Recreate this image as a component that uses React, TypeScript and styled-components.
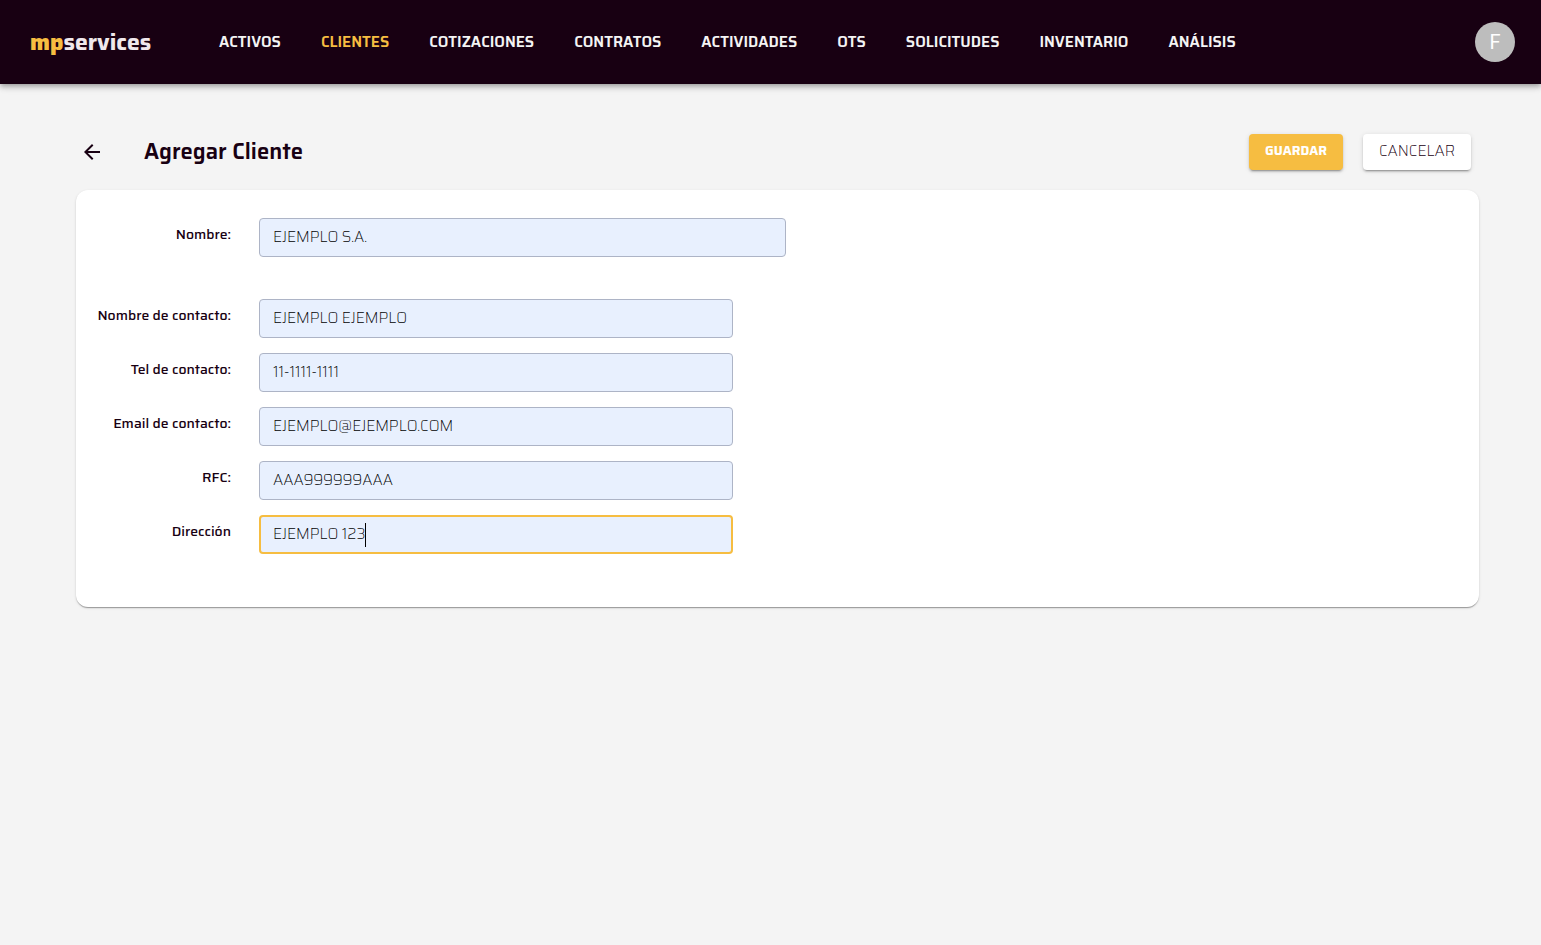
import React from "react";
import styled, { createGlobalStyle, css } from "styled-components";

const ink = "#180012";
const amber = "#f6bd41";

const GlobalStyle = createGlobalStyle`
  *, *::before, *::after { box-sizing: border-box; }
  body {
    margin: 0;
    min-height: 100vh;
    background: #f4f4f4;
    color: ${ink};
    font-family: Saira, Roboto, "Liberation Sans", sans-serif;
    font-size: 14px;
  }
`;

const Header = styled.header`
  display: flex;
  align-items: center;
  min-height: 84px;
  padding: 0 26px 0 30px;
  background: ${ink};
  box-shadow: 0 2px 4px -1px rgba(0, 0, 0, 0.2), 0 4px 5px rgba(0, 0, 0, 0.14),
    0 1px 10px rgba(0, 0, 0, 0.12);
`;

const Logo = styled.a`
  flex: none;
  width: 189px;
  color: #f0e8ec;
  font-size: 23px;
  font-weight: 700;
  line-height: 26px;
  text-decoration: none;
`;

const LogoAccent = styled.span`
  color: ${amber};
  font-weight: 800;
`;

const Nav = styled.nav`
  display: flex;
  flex-wrap: wrap;
  gap: 8px 40px;
  flex: 1;
`;

const NavLink = styled.a<{ $active?: boolean }>`
  color: ${(p) => (p.$active ? amber : "#f4f4f4")};
  font-size: 15px;
  font-weight: 600;
  line-height: 20px;
  text-decoration: none;
`;

const Avatar = styled.button`
  display: flex;
  align-items: center;
  justify-content: center;
  flex: none;
  width: 40px;
  height: 40px;
  padding: 0;
  border: 0;
  border-radius: 50%;
  background: #bdbdbd;
  color: #fff;
  font-family: Roboto, sans-serif;
  font-size: 20px;
  line-height: 20px;
`;

const Main = styled.main`
  padding: 50px 62px 40px 76px;
`;

const Toolbar = styled.div`
  display: flex;
  align-items: center;
  gap: 20px;
  padding: 0 8px 0 4px;
  margin-bottom: 20px;
`;

const BackLink = styled.a`
  display: flex;
  color: ${ink};
`;

const Title = styled.h1`
  flex: 1;
  margin: 0 0 0 20px;
  font-size: 22px;
  font-weight: 600;
  line-height: 28px;
`;

const Button = styled.button<{ $primary?: boolean }>`
  height: 36px;
  padding: 0 0 2px;
  border: 0;
  border-radius: 4px;
  font-family: inherit;
  line-height: 20px;
  box-shadow: 0 3px 1px -2px rgba(0, 0, 0, 0.2), 0 2px 2px rgba(0, 0, 0, 0.14),
    0 1px 5px rgba(0, 0, 0, 0.12);
  ${(p) =>
    p.$primary
      ? css`
          width: 94px;
          background: ${amber};
          color: #fff;
          font-size: 13px;
          font-weight: 700;
        `
      : css`
          width: 108px;
          background: #fff;
          color: ${ink};
          font-size: 15px;
          font-weight: 200;
        `}
`;

const Card = styled.form`
  display: flex;
  flex-direction: column;
  gap: 43px;
  padding: 28px 20px 54px 0;
  border-radius: 12px;
  background: #fff;
  box-shadow: 0 2px 1px -1px rgba(0, 0, 0, 0.2), 0 1px 1px rgba(0, 0, 0, 0.14),
    0 1px 3px rgba(0, 0, 0, 0.12);
`;

const FieldGroup = styled.div`
  display: flex;
  flex-direction: column;
  gap: 16px;
`;

const Row = styled.div`
  display: flex;
  align-items: flex-start;
  gap: 28px;
  height: 38px;
`;

const Label = styled.label`
  flex: none;
  width: 155px;
  padding-top: 6px;
  font-size: 14px;
  font-weight: 500;
  line-height: 20px;
  text-align: right;
`;

const InputBox = styled.div<{ $wide?: boolean }>`
  position: relative;
  flex: 0 1 ${(p) => (p.$wide ? 527 : 474)}px;
  min-width: 0;
`;

const Input = styled.input<{ $active?: boolean }>`
  display: block;
  width: 100%;
  height: 39px;
  padding: 0 ${(p) => (p.$active ? 12 : 13)}px 2px;
  border: ${(p) => (p.$active ? `2px solid ${amber}` : "1px solid #adb4c6")};
  border-radius: 4px;
  outline: 0;
  background: #e8f0fe;
  color: #000;
  font-family: inherit;
  font-size: 15px;
  font-weight: 200;
  line-height: 24px;
`;

const Caret = styled.span`
  position: absolute;
  top: 8px;
  left: 106px;
  width: 1px;
  height: 24px;
  background: #000;
`;

const sections = [
  "ACTIVOS",
  "CLIENTES",
  "COTIZACIONES",
  "CONTRATOS",
  "ACTIVIDADES",
  "OTS",
  "SOLICITUDES",
  "INVENTARIO",
  "ANÁLISIS",
];

type FieldProps = {
  id: string;
  label: string;
  value: string;
  type?: string;
  wide?: boolean;
  active?: boolean;
};

const contactFields: FieldProps[] = [
  { id: "contacto", label: "Nombre de contacto:", value: "EJEMPLO EJEMPLO" },
  { id: "telefono", label: "Tel de contacto:", value: "11-1111-1111", type: "tel" },
  { id: "email", label: "Email de contacto:", value: "EJEMPLO@EJEMPLO.COM", type: "email" },
  { id: "rfc", label: "RFC:", value: "AAA999999AAA" },
  { id: "direccion", label: "Dirección", value: "EJEMPLO 123", active: true },
];

function Field({ id, label, value, type = "text", wide, active }: FieldProps) {
  return (
    <Row>
      <Label htmlFor={id}>{label}</Label>
      <InputBox $wide={wide}>
        <Input id={id} name={id} type={type} defaultValue={value} $active={active} />
        {active && <Caret aria-hidden="true" />}
      </InputBox>
    </Row>
  );
}

export default function App() {
  return (
    <>
      <GlobalStyle />
      <Header>
        <Logo href="#inicio">
          <LogoAccent>mp</LogoAccent>services
        </Logo>
        <Nav>
          {sections.map((name) => (
            <NavLink key={name} href={`#${name.toLowerCase()}`} $active={name === "CLIENTES"}>
              {name}
            </NavLink>
          ))}
        </Nav>
        <Avatar type="button">F</Avatar>
      </Header>
      <Main>
        <Toolbar>
          <BackLink href="#clientes" aria-label="Volver">
            <svg width="24" height="24" viewBox="0 0 24 24" fill="currentColor" aria-hidden="true">
              <path d="M20 11H7.83l5.59-5.59L12 4l-8 8 8 8 1.41-1.41L7.83 13H20v-2z" />
            </svg>
          </BackLink>
          <Title>Agregar Cliente</Title>
          <Button type="submit" form="cliente" $primary>
            GUARDAR
          </Button>
          <Button type="button">CANCELAR</Button>
        </Toolbar>
        <Card id="cliente" onSubmit={(e) => e.preventDefault()}>
          <Field id="nombre" label="Nombre:" value="EJEMPLO S.A." wide />
          <FieldGroup>
            {contactFields.map((field) => (
              <Field key={field.id} {...field} />
            ))}
          </FieldGroup>
        </Card>
      </Main>
    </>
  );
}
